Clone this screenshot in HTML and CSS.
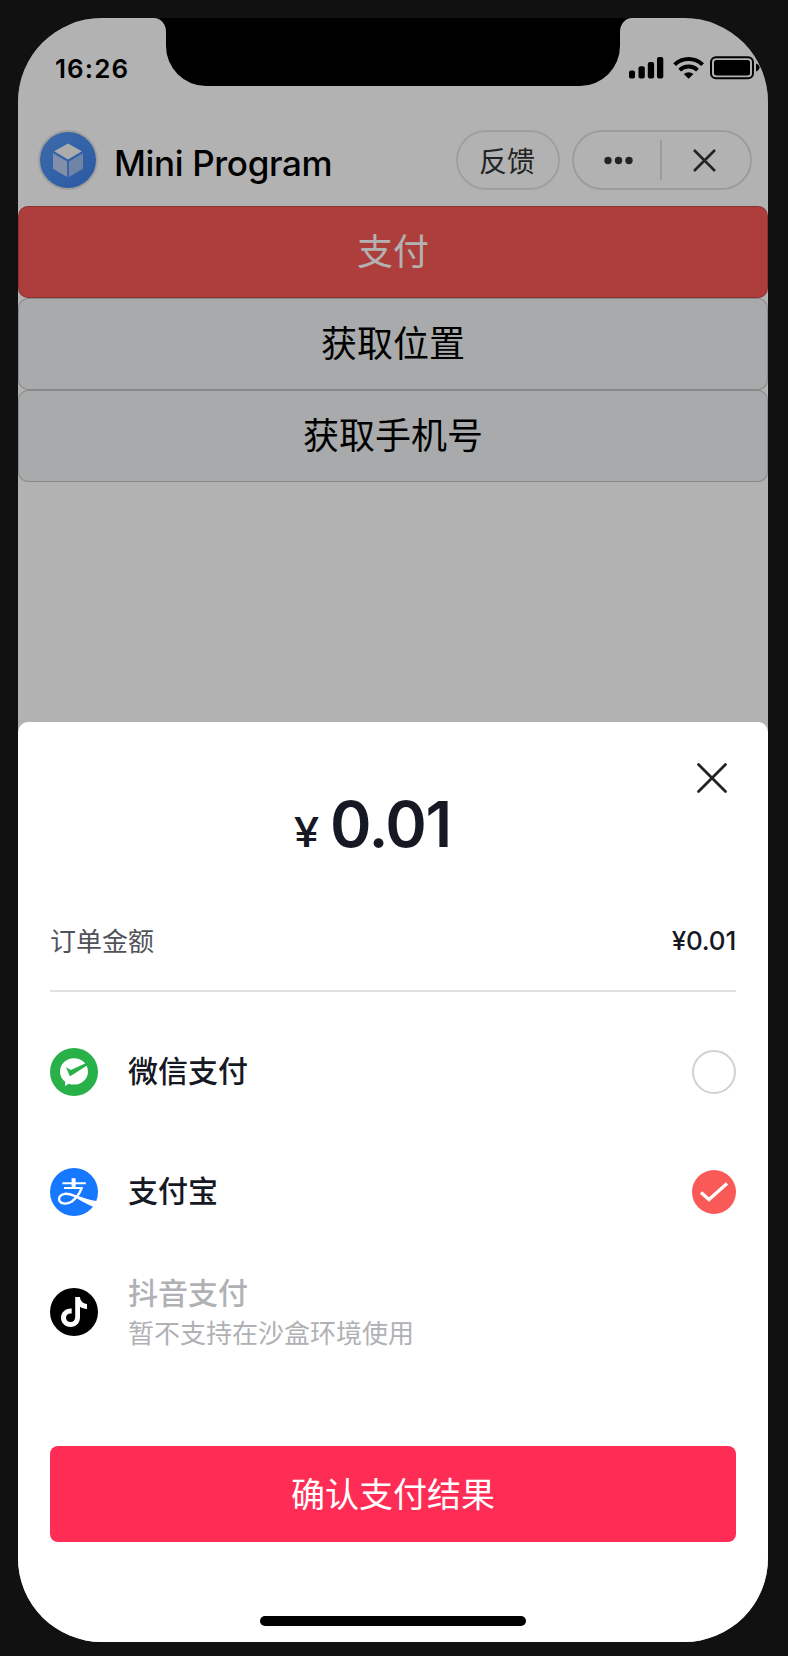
FILE: index.html
```html
<!DOCTYPE html>
<html lang="zh-CN">
<head>
<meta charset="UTF-8" />
<meta name="viewport" content="width=device-width, initial-scale=1" />
<title>Mini Program</title>
<link rel="stylesheet" href="styles.css">
</head>
<body>
<div class="phone">
  <!-- Status bar -->
  <div class="status-bar">
    <span class="time">16:26</span>
    <svg class="status-icons" width="134" height="24" viewBox="0 0 134 24">
      <rect x="1" y="14.5" width="6" height="8" rx="2" />
      <rect x="10.5" y="10.3" width="6.3" height="12.2" rx="2" />
      <rect x="19.8" y="6" width="6.3" height="16.5" rx="2" />
      <rect x="29" y="1" width="6.3" height="21.5" rx="2" />
      <g fill="none" stroke="#000" stroke-width="4">
        <path d="M46.600 8.600a20.500 20.500 0 0 1 28 0" />
        <path d="M51.700 14.100a13 13 0 0 1 17.800 0" />
      </g>
      <path d="M60.600 22.800l-4.800-4.900q4.800-3.400 9.600 0z" />
      <rect x="83" y="1.200" width="42" height="21" rx="5" fill="none" stroke="#000" stroke-width="2" />
      <rect x="86" y="4" width="36" height="15.500" rx="2.500" />
      <path d="M128 7.500q3.500 1.500 3.500 4t-3.500 4z" />
    </svg>
  </div>

  <!-- Nav bar -->
  <div class="nav-bar">
    <svg class="avatar" width="60" height="60" viewBox="0 0 60 60">
      <defs>
        <linearGradient id="avatar-bg" x1="0" y1="0" x2="1" y2="1">
          <stop offset="0" stop-color="#589af5" />
          <stop offset="1" stop-color="#3d80ea" />
        </linearGradient>
      </defs>
      <circle cx="30" cy="30" r="29" fill="url(#avatar-bg)" stroke="#e4e4e4" stroke-width="2" />
      <path d="M30 13.5l13.800 7.800L30 29.400l-13.800-8.100z" fill="#f6f6f6" />
      <path d="M15 23.200l14.100 8.200v15.500L15 38.800z" fill="#b9cdf2" />
      <path d="M45 23.200l-14.100 8.200v15.500L45 38.800z" fill="#a1bdef" />
    </svg>
    <span class="nav-title">Mini Program</span>
    <div class="feedback">反馈</div>
    <div class="capsule">
      <svg class="capsule-more" width="86" height="56" viewBox="0 0 86 56">
        <circle cx="34" cy="28.500" r="3.700" />
        <circle cx="44.500" cy="28.500" r="3.700" />
        <circle cx="55" cy="28.500" r="3.700" />
      </svg>
      <span class="capsule-line"></span>
      <svg class="capsule-close" width="88" height="56" viewBox="0 0 88 56">
        <path d="M32 18l21 21M53 18L32 39" />
      </svg>
    </div>
  </div>

  <!-- Page -->
  <div class="page">
    <div class="btn btn-primary">支付</div>
    <div class="btn">获取位置</div>
    <div class="btn">获取手机号</div>
  </div>

  <div class="mask"></div>

  <!-- Notch -->
  <svg class="notch" width="478" height="68" viewBox="0 0 478 68">
    <path d="M0 0h478a12 14 0 0 0-12 14v14a40 40 0 0 1-40 40H52a40 40 0 0 1-40-40V14A12 14 0 0 0 0 0z" />
  </svg>

  <!-- Payment sheet -->
  <div class="sheet">
    <svg class="sheet-close" width="32" height="32" viewBox="0 0 32 32">
      <path d="M2.500 2.500l27 27M29.500 2.500l-27 27" />
    </svg>
    <div class="price"><span class="price-unit">¥</span><span class="price-num">0.01</span></div>
    <div class="order">
      <span class="order-label">订单金额</span>
      <span class="order-value">¥0.01</span>
    </div>

    <div class="pay-item">
      <svg class="pay-icon" width="48" height="48" viewBox="0 0 48 48">
        <circle cx="24" cy="24" r="24" fill="#27b148" />
        <path d="M24 10.200c7.800 0 14 5.900 14 13.200s-6.200 13.200-14 13.200c-1.800 0-3.600-.3-5.200-.9l-3.700 2.300.1-4.300C12 31.500 10 27.700 10 23.400c0-7.300 6.200-13.200 14-13.200z" fill="#fff" />
        <path d="M16 19.200l4.900 2.900L35.600 15.200l1.400 2.200-16 10.400q-1.100.6-1.600-.5z" fill="#27b148" />
      </svg>
      <span class="pay-name">微信支付</span>
      <span class="radio"></span>
    </div>

    <div class="pay-item">
      <svg class="pay-icon" width="48" height="48" viewBox="0 0 48 48">
        <circle cx="24" cy="24" r="24" fill="#1678ff" />
        <g fill="none" stroke="#fff">
          <path d="M12.300 15.200h23.500M14 20.100h18.800" stroke-width="2" />
          <path d="M23.600 10.200v10" stroke-width="4" />
          <path d="M31.700 20c-2.500 6.500-6.300 11-10.200 13.700-4 2.300-9.800 2.800-11.900-.5-1.700-3.400.8-7 5.200-7.400 4-.4 8 1.300 12.200 3.300" stroke-width="2.300" />
        </g>
        <path d="M24.500 26.500c6.500 2.800 13.500 5.200 23 6.700-.8 2-2 4-3.600 5.800-6.500-2.600-13-6-18.700-9.800z" fill="#fff" />
      </svg>
      <span class="pay-name">支付宝</span>
      <svg class="radio-checked" width="44" height="44" viewBox="0 0 44 44">
        <circle cx="22" cy="22" r="22" />
        <path d="M9 22.500l8 7L35 13.500" />
      </svg>
    </div>

    <div class="pay-item disabled">
      <svg class="pay-icon" width="48" height="48" viewBox="0 0 48 48">
        <circle cx="24" cy="24" r="24" />
        <path d="M25.200 9h4.800c.3 3.800 2.900 6.700 7 7.100v4.800c-2.700 0-5-.8-7-2.200v10.600c0 5.900-4 9.700-9.500 9.700-5.300 0-9.500-4-9.500-9.200 0-5.600 4.700-9.700 10.700-9.300v5.100c-3.200-.7-5.700 1.200-5.700 4.100 0 2.500 2 4.400 4.500 4.400 2.900 0 4.700-1.900 4.700-5z" fill="#fff" />
      </svg>
      <div class="pay-info">
        <span class="pay-name">抖音支付</span>
        <span class="pay-desc">暂不支持在沙盒环境使用</span>
      </div>
    </div>

    <div class="confirm">确认支付结果</div>
    <div class="home-bar"></div>
  </div>
</div>
</body>
</html>
```
FILE: styles.css
```css
* {
  box-sizing: border-box;
}

body {
  margin: 0;
  padding: 18px 20px 14px 18px;
  background: #111;
  font-family: Inter, "Noto Sans CJK SC", sans-serif;
  color: #000;
}

svg {
  display: block;
  flex: none;
}

.phone {
  position: relative;
  width: 750px;
  height: 1624px;
  border-radius: 84px;
  background: #fff;
  overflow: hidden;
}

/* Status bar */
.status-bar {
  display: flex;
  justify-content: space-between;
  height: 88px;
  padding: 38px 6px 0 37px;
}

.time {
  font-size: 26px;
  font-weight: 600;
  line-height: 25px;
  letter-spacing: 1.1px;
}

/* Nav bar */
.nav-bar {
  display: flex;
  align-items: center;
  height: 100px;
  padding: 8px 16px 0 20px;
}

.nav-title {
  flex: 1;
  margin-left: 16px;
  padding-top: 5px;
  font-size: 35px;
  font-weight: 500;
  letter-spacing: -0.35px;
  white-space: nowrap;
}

.feedback {
  width: 104px;
  height: 60px;
  padding-right: 2px;
  border: 2px solid #e4e4e4;
  border-radius: 30px;
  color: #333;
  font-size: 28px;
  line-height: 60px;
  text-align: center;
}

.capsule {
  display: flex;
  align-items: center;
  width: 180px;
  height: 60px;
  margin-left: 12px;
  border: 2px solid #e0e0e0;
  border-radius: 30px;
}

.capsule-more {
  fill: #333;
}

.capsule-line {
  width: 2px;
  height: 40px;
  background: #e0e0e0;
}

.capsule-close {
  stroke: #333;
  stroke-width: 2.6;
}

/* Page buttons */
.btn {
  height: 92px;
  border: 1px solid rgba(0, 0, 0, 0.2);
  border-radius: 10px;
  background: #f2f4f5;
  font-size: 36px;
  line-height: 90px;
  text-align: center;
}

.btn-primary {
  background: #fa5a57;
  color: #fff;
}

.mask {
  position: absolute;
  inset: 0;
  background: rgba(0, 0, 0, 0.3);
}

.notch {
  position: absolute;
  top: 0;
  left: 136px;
}

/* Payment sheet */
.sheet {
  position: absolute;
  left: 0;
  right: 0;
  bottom: 0;
  height: 920px;
  padding: 0 32px;
  border-radius: 10px 10px 0 0;
  background: #fff;
  color: #161823;
}

.sheet-close {
  position: absolute;
  top: 40px;
  right: 40px;
  stroke: #222;
  stroke-width: 2.8;
  stroke-linecap: round;
}

.price {
  display: flex;
  justify-content: center;
  align-items: baseline;
  height: 168px;
  padding: 63px 40px 0 0;
  font-weight: 600;
}

.price-unit {
  margin-right: 12px;
  font-size: 41px;
  font-weight: 500;
  transform: scaleX(1.12);
}

.price-num {
  font-size: 63px;
  line-height: 78px;
  letter-spacing: -1.4px;
}

.order {
  display: flex;
  justify-content: space-between;
  align-items: center;
  height: 102px;
  margin-bottom: 20px;
  border-bottom: 2px solid #e1e1e1;
  font-size: 26px;
}

.order-label {
  padding-bottom: 2px;
  color: #50525a;
}

.order-value {
  font-weight: 500;
  letter-spacing: -0.2px;
}

.pay-item {
  display: flex;
  align-items: center;
  height: 120px;
}

.pay-name {
  flex: 1;
  margin-left: 30px;
  padding-bottom: 2px;
  font-size: 30px;
  font-weight: 500;
  line-height: 42px;
}

.radio {
  width: 44px;
  height: 44px;
  border: 2px solid #d0d0d0;
  border-radius: 50%;
}

.radio-checked circle {
  fill: #fa5a57;
}

.radio-checked path {
  fill: none;
  stroke: #fff;
  stroke-width: 3.2;
}

.pay-info {
  display: flex;
  flex-direction: column;
  margin-left: 30px;
}

.pay-info .pay-name {
  margin-left: 0;
}

.pay-desc {
  font-size: 26px;
  line-height: 36px;
}

.disabled {
  color: #b0b1b5;
}

.confirm {
  height: 96px;
  margin-top: 74px;
  border-radius: 8px;
  background: #ff2c55;
  color: #fff;
  font-size: 34px;
  line-height: 98px;
  text-align: center;
}

.home-bar {
  width: 266px;
  height: 10px;
  margin: 74px auto 0;
  border-radius: 5px;
  background: #000;
}
```
